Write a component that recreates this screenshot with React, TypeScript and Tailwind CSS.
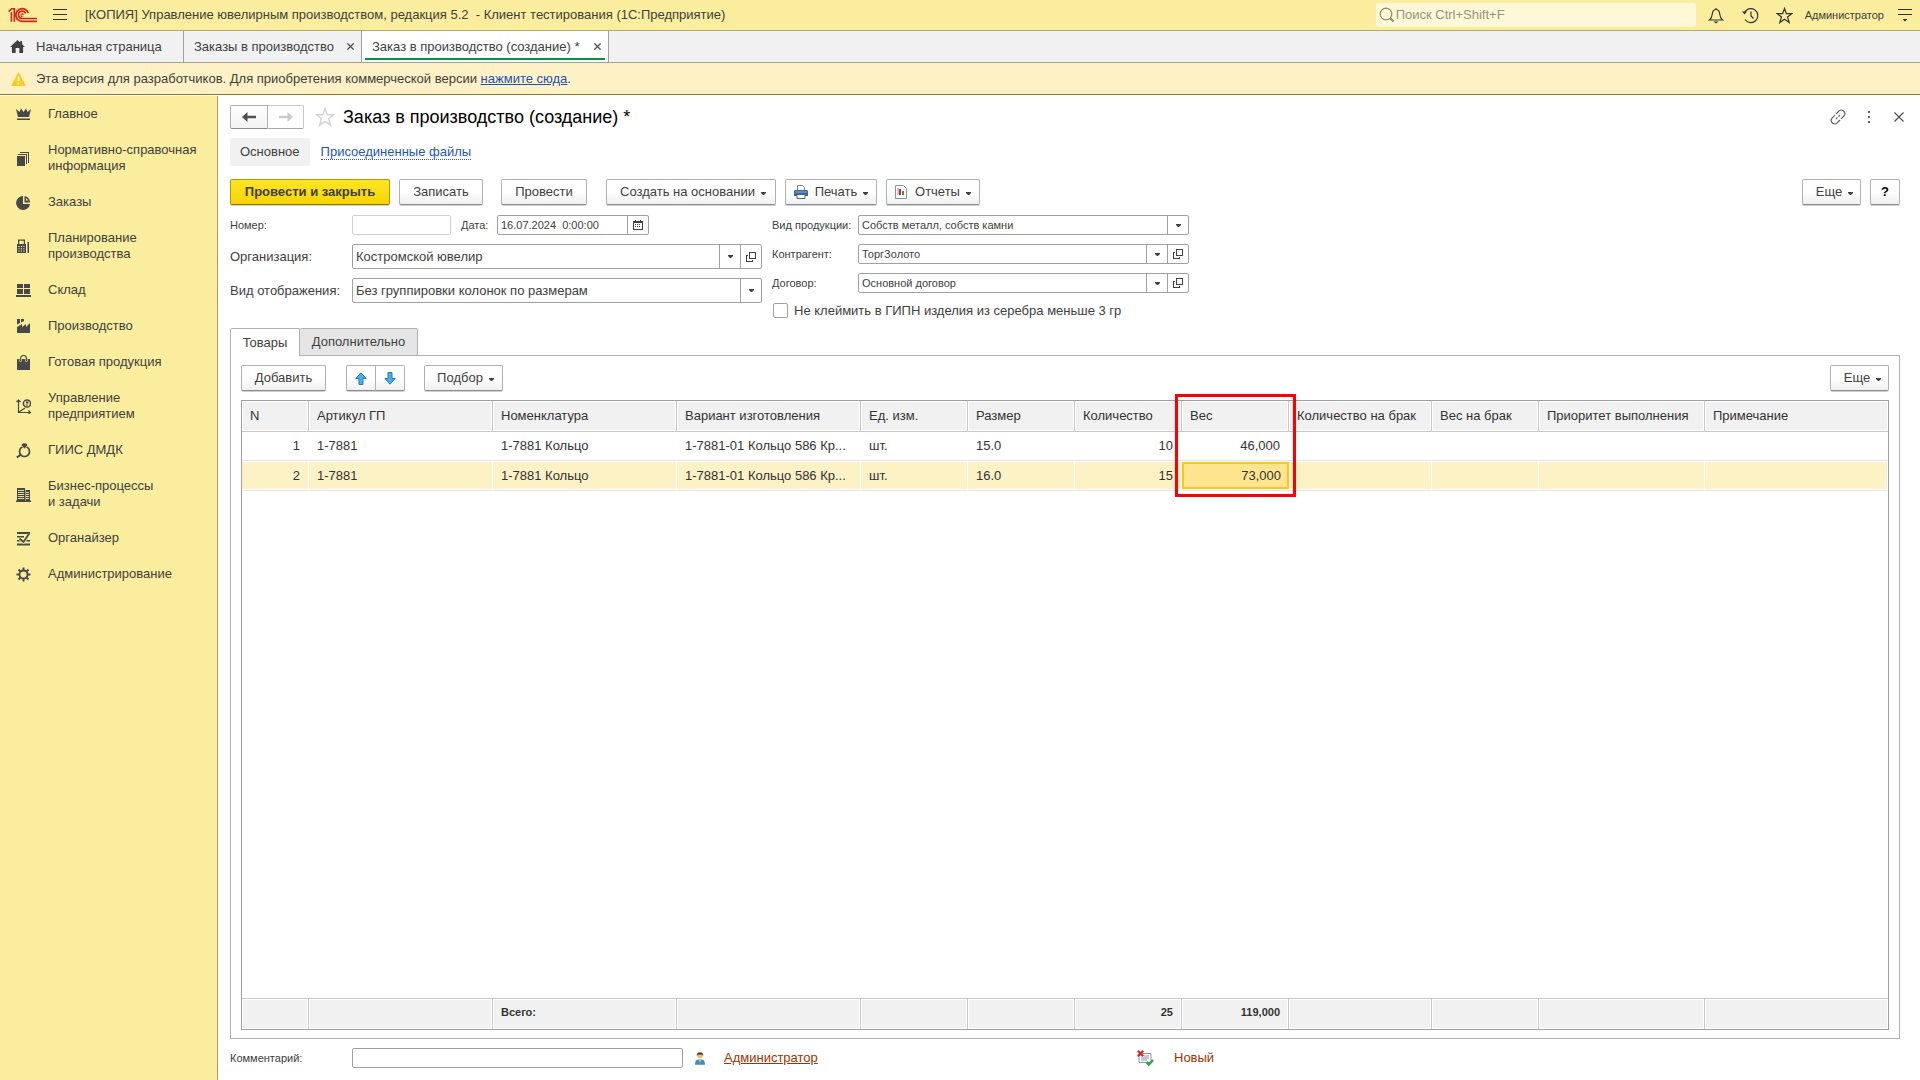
import type { ReactNode } from "react";

/* ---------- icons ---------- */

const Caret = () => (
  <svg width="5" height="3" viewBox="0 0 5 3" className="shrink-0" aria-hidden="true">
    <path d="M0 0h5v1L3 3H2L0 1z" fill="#404040" />
  </svg>
);

const OpenIcon = () => (
  <svg width="10" height="10" viewBox="0 0 10 10" fill="none" stroke="#404040" shapeRendering="crispEdges" aria-hidden="true">
    <path d="M3.5 .5h6v6h-6z" />
    <path d="M2 3.5H.5v6h6V8" />
  </svg>
);

const Star = ({ size, color }: { size: number; color: string }) => (
  <svg width={size} height={size} viewBox="0 0 18 18" fill="none" stroke={color} strokeWidth="1.3" aria-hidden="true">
    <path d="M9 1.500l2 5.500h5.700l-4.500 3.600 1.700 5.700L9 12.900l-4.900 3.400 1.700-5.700L1.300 7H7z" />
  </svg>
);

const Logo = () => (
  <svg width="30" height="18" viewBox="0 0 31 18" fill="none" stroke="#d6261c" aria-label="1С" role="img">
    <path d="M.5 5.500L4 2.500h2.500V16" strokeWidth="1.700" />
    <path d="M3.500 6V16" strokeWidth="1.700" />
    <path d="M21 7A6.600 6.600 0 1 0 15 15.600H30" strokeWidth="1.900" />
    <path d="M18.200 7.500A3.800 3.800 0 1 0 15 12.600H30" strokeWidth="1.700" />
    <path d="M16 8.800a1.300 1.300 0 1 0-.8 1.700" strokeWidth="1.200" />
  </svg>
);

const Burger = () => (
  <svg width="14" height="14" viewBox="0 0 14 14" stroke="#333" shapeRendering="crispEdges" aria-hidden="true">
    <path d="M0 1.500h14M0 6.500h14M0 11.500h14" />
  </svg>
);

const HomeIcon = () => (
  <svg width="15" height="13" viewBox="0 0 16 14" fill="#404040" aria-hidden="true">
    <path d="M8 0l3 2.800V1h2v3.600L16 7.500h-2V14h-4V8.500H6V14H2V7.500H0z" />
  </svg>
);

const WarnIcon = () => (
  <svg width="15" height="14" viewBox="0 0 15 14" aria-hidden="true">
    <path d="M7.500 0L15 14H0z" fill="#fcc91f" />
    <path d="M7.500 4.500v5M7.500 10.800v1.500" stroke="#fff" strokeWidth="1.600" />
  </svg>
);

const SearchIcon = () => (
  <svg width="16" height="16" viewBox="0 0 16 16" fill="none" stroke="#8f8a6c" aria-hidden="true">
    <circle cx="7" cy="7" r="5.800" strokeWidth="1.200" />
    <path d="M11 11l3.500 3.500" strokeWidth="2.200" />
  </svg>
);

const BellIcon = () => (
  <svg width="16" height="17" viewBox="0 0 16 17" fill="none" stroke="#333" strokeWidth="1.200" aria-hidden="true">
    <path d="M8 1v1.500M1.500 13c2-1.500 2.500-3.500 2.800-6C4.600 4 6 2.500 8 2.500S11.400 4 11.700 7c.3 2.500.8 4.500 2.800 6z" />
    <path d="M5.500 14.500h5L8 16.500z" fill="#333" stroke="none" />
  </svg>
);

const HistoryIcon = () => (
  <svg width="17" height="17" viewBox="0 0 17 17" fill="none" stroke="#333" strokeWidth="1.200" aria-hidden="true">
    <path d="M2.300 6A7 7 0 1 1 3 12.500" />
    <path d="M9 4.500v4.500l2.500 2.500" />
    <path d="M0 4.500h5L2.500 7.500z" fill="#333" stroke="none" />
  </svg>
);

const MenuDownIcon = () => (
  <svg width="14" height="14" viewBox="0 0 14 14" stroke="#333" aria-hidden="true">
    <path d="M0 1.500h14M0 6.500h14" shapeRendering="crispEdges" />
    <path d="M4.500 11h5L7 13.500z" fill="#333" stroke="none" />
  </svg>
);

const LinkIcon = () => (
  <svg width="16" height="16" viewBox="0 0 16 16" fill="none" stroke="#606060" strokeWidth="1.200" aria-hidden="true">
    <path d="M6 5l3.100-3.100a3 3 0 0 1 4.300 0l.6.6a3 3 0 0 1 0 4.300L11 9.900" />
    <path d="M10 11l-3.100 3.100a3 3 0 0 1-4.300 0L2 13.500a3 3 0 0 1 0-4.300L5 6.100" />
    <path d="M6 10l1.500-1.500M8.500 7.500L10 6" />
  </svg>
);

const DotsIcon = () => (
  <svg width="4" height="12" viewBox="0 0 4 12" fill="#606060" aria-hidden="true">
    <path d="M1 0h2v2H1zM1 5h2v2H1zM1 10h2v2H1z" />
  </svg>
);

const CrossIcon = ({ size }: { size: number }) => (
  <svg width={size} height={size} viewBox="0 0 10 10" stroke="#505050" strokeWidth={size < 10 ? 1.8 : 1.2} aria-hidden="true">
    <path d="M.5 .5l9 9M9.500 .5l-9 9" />
  </svg>
);

const ArrowH = ({ flip, color }: { flip?: boolean; color: string }) => (
  <svg width="14" height="10" viewBox="0 0 14 10" fill={color} aria-hidden="true">
    <path d={flip ? "M14 5L8.500 0v3.700H0v2.600h8.500V10z" : "M0 5l5.500-5v3.700H14v2.600H5.500V10z"} />
  </svg>
);

const ArrowV = ({ down }: { down?: boolean }) => (
  <svg width="12" height="13" viewBox="0 0 12 13" fill="#45b0ee" stroke="#2e79ac" aria-hidden="true">
    <path d={down ? "M6 12.200L.8 6.500H4v-6h4v6h3.200z" : "M6 .8l5.200 5.700H8v6H4v-6H.8z"} />
  </svg>
);

const CalendarIcon = () => (
  <svg width="10" height="10" viewBox="0 0 10 10" shapeRendering="crispEdges" aria-hidden="true">
    <path d="M.5 1.500h9v8h-9z" fill="#fff" stroke="#404040" />
    <path d="M0 1h10v2H0zM2 0h1v1H2zM7 0h1v1H7z" fill="#404040" />
    <path d="M2 4h1v1H2zM4 4h1v1H4zM6 4h1v1H6zM2 6h1v1H2zM4 6h1v1H4zM6 6h1v1H6z" fill="#404040" />
  </svg>
);

const PrinterIcon = () => (
  <svg width="14" height="14" viewBox="0 0 14 14" aria-hidden="true">
    <path d="M3.500 6V.5h5L10.500 2.500V6" fill="#fff" stroke="#6d8196" />
    <path d="M1 5h12l1 1v5H0V6z" fill="#3b6a97" />
    <path d="M1.500 7h11" stroke="#8fb4d6" />
    <path d="M3 9.500h8v4H3z" fill="#fff" stroke="#4c6681" />
  </svg>
);

const ReportIcon = () => (
  <svg width="12" height="14" viewBox="0 0 12 14" aria-hidden="true">
    <path d="M.5 .5h8l3 3v10H.5z" fill="#fff" stroke="#8296aa" />
    <path d="M2.500 3h1v7h-1z" fill="#8296aa" />
    <path d="M4 4h2v6H4z" fill="#e0231b" />
    <path d="M7 6h2v4H7z" fill="#23a33a" />
  </svg>
);

const PersonIcon = () => (
  <svg width="10" height="13" viewBox="0 0 11 14" aria-hidden="true">
    <circle cx="5.500" cy="4" r="3" fill="#f1bd72" />
    <path d="M2 4.500C1.700 1.500 3 0 5.500 0S9.300 1.500 9 4.500L8 3 5.500 2.500 3 3z" fill="#4b3a2a" />
    <path d="M0 14c0-4 1-5.500 3.500-5.800h4C10 8.500 11 10 11 14z" fill="#378fc9" />
    <path d="M4 8h3l-1.500 4z" fill="#f1bd72" />
  </svg>
);

const StatusIcon = () => (
  <svg width="17" height="16" viewBox="0 0 17 16" fill="none" aria-hidden="true">
    <path d="M2 3.500h12v9H2z" fill="#fff" stroke="#8794a6" />
    <path d="M7 6h5M4 8h8M4 10h6" stroke="#8794a6" />
    <path d="M.8 .8l5.400 5.400M6.200 .8L.8 6.200" stroke="#d9242b" strokeWidth="2.200" />
    <path d="M9.500 12l2.300 2.500L16 10" stroke="#27a844" strokeWidth="2.500" />
  </svg>
);

/* ---------- section icons, 15 x 15 ---------- */

const sectionIcons: Record<string, ReactNode> = {
  crown: <path d="M0 2l3.500 3L5 1.500 7.500 5 10 1.500 11.500 5 15 2l-2 8H2zM1 11.500h13V13H1z" />,
  books: <path d="M1 5h8v10H1zM2 3h9v10h-1V4H2zM4 1h9v11h-1V2H4z" />,
  pie: (
    <>
      <path d="M7 1a7 7 0 1 0 7 8H7z" />
      <path d="M8.500 1v6.500H14A6.200 6.200 0 0 0 8.500 1zM10 3l2.500 2.500H10z" fillRule="evenodd" />
    </>
  ),
  calc: (
    <>
      <path d="M2 5V0.500h7V5h1v9H1V5zM3.200 1.700V5h4.600V1.700zM11.500 3v11H13V3z" fillRule="evenodd" />
      <path d="M2.500 7.500h6M2.500 9.800h6M2.500 12h6" stroke="#fbed9e" strokeDasharray="1.200 1.200" />
    </>
  ),
  store: <path d="M1 1h6v4H1zM8 1h6v4H8zM1 6h6v5H1zM8 6h6v5H8zM0 12h15v2H0z" />,
  factory: <path d="M1 0h3v4l-3 1.500zM5 0h3v2L5 3.500zM1 8l5-3v3l4-3v3l4-4v10H1z" />,
  bag: (
    <>
      <path d="M1 4h13v11H1z" />
      <path d="M4.500 6.500V3.500a3 3 0 0 1 6 0v3" fill="none" stroke="#fbed9e" strokeWidth="2.400" />
      <path d="M4.500 6V3.500a3 3 0 0 1 6 0V6" fill="none" stroke="#484848" strokeWidth="1.200" />
    </>
  ),
  chart: (
    <>
      <path d="M2.500 1v12.500H14M.5 3l2-2 2 2M12.500 11.500l2 2-2 1.500M3 13l6-4" fill="none" stroke="#484848" strokeWidth="1.200" />
      <circle cx="11" cy="4.500" r="3.600" fill="none" stroke="#484848" strokeWidth="1.500" />
      <path d="M10 2.500h2.500v2H10zM9.500 5.500h2.500v1H9.500z" />
    </>
  ),
  ring: (
    <>
      <circle cx="8.500" cy="8.500" r="5" fill="none" stroke="#484848" strokeWidth="1.700" />
      <path d="M5 2l2-2h3l2 2-3.500 4z" stroke="#fbed9e" strokeWidth=".7" />
      <path d="M5 11.500L.8 14.500" stroke="#484848" strokeWidth="2" />
    </>
  ),
  building: (
    <>
      <path d="M1 1h8v13H1zM9.500 3H14v11H9.500zM0 13.500h15V15H0z" />
      <path d="M2 3.500h6M2 5.500h6M2 7.500h6M2 9.500h6M2 11.500h6M10 5.500h3M10 7.500h3M10 9.500h3M10 11.500h3" stroke="#fbed9e" strokeWidth=".9" />
    </>
  ),
  organizer: (
    <>
      <path d="M1 1h13v2H1zM1 5h7v1.500H1zM1 9h13v1.500H1zM1 12.500h13v2H1z" />
      <path d="M3.500 7.500l4 3.500 6-8" fill="none" stroke="#fbed9e" strokeWidth="3" />
      <path d="M3.500 7.500l4 3.500 6-9" fill="none" stroke="#484848" strokeWidth="1.700" />
    </>
  ),
  gear: (
    <>
      <circle cx="7.500" cy="7.500" r="4" fill="none" stroke="#484848" strokeWidth="1.800" />
      <path d="M7.500 .5v3M7.500 11.500v3M.5 7.500h3M11.500 7.500h3M2.500 2.500l1.800 1.800M10.700 10.700l1.800 1.800M12.500 2.500l-1.800 1.800M4.300 10.700l-1.800 1.800" stroke="#484848" strokeWidth="2" />
    </>
  ),
};

const sections: { icon: string; lines: string[] }[] = [
  { icon: "crown", lines: ["Главное"] },
  { icon: "books", lines: ["Нормативно-справочная", "информация"] },
  { icon: "pie", lines: ["Заказы"] },
  { icon: "calc", lines: ["Планирование", "производства"] },
  { icon: "store", lines: ["Склад"] },
  { icon: "factory", lines: ["Производство"] },
  { icon: "bag", lines: ["Готовая продукция"] },
  { icon: "chart", lines: ["Управление", "предприятием"] },
  { icon: "ring", lines: ["ГИИС ДМДК"] },
  { icon: "building", lines: ["Бизнес-процессы", "и задачи"] },
  { icon: "organizer", lines: ["Органайзер"] },
  { icon: "gear", lines: ["Администрирование"] },
];

/* ---------- controls ---------- */

const buttonLook =
  "flex items-center justify-center h-[26px] border border-[#b0b0b0] border-b-[#8c8c8c] rounded-[2px] bg-linear-to-b from-white from-50% to-[#f0f0f0] shadow-[0_1px_0_#d0d0d0] whitespace-nowrap";

function Button({ children, className = "", menu = false, label }: { children?: ReactNode; className?: string; menu?: boolean; label?: string }) {
  return (
    <button type="button" aria-label={label} className={`${buttonLook} ${className}`}>
      {children}
      {menu && (
        <span className="ml-1.5 mt-0.5">
          <Caret />
        </span>
      )}
    </button>
  );
}

function Combo({ id, value, small = false, open = false }: { id: string; value: string; small?: boolean; open?: boolean }) {
  return (
    <div className={`flex flex-1 min-w-0 border border-[#a0a0a0] rounded-[2px] bg-white ${small ? "h-5 text-[11px]" : "h-[25px]"}`}>
      <div className="relative flex-1 min-w-0 flex">
        <select id={id} defaultValue={value} className="w-full appearance-none bg-transparent pl-[3px] pr-6 outline-none">
          <option>{value}</option>
        </select>
        <span className="pointer-events-none absolute inset-y-0 right-0 w-[21px] border-l border-[#a0a0a0] flex items-center justify-center">
          <Caret />
        </span>
      </div>
      {open && (
        <button type="button" aria-label="Открыть" className="w-[21px] border-l border-[#a0a0a0] flex items-center justify-center">
          <OpenIcon />
        </button>
      )}
    </div>
  );
}

/* ---------- goods table ---------- */

const columns: { title: string; width: string; right?: boolean }[] = [
  { title: "N", width: "w-[67px]", right: true },
  { title: "Артикул ГП", width: "w-[184px]" },
  { title: "Номенклатура", width: "w-[184px]" },
  { title: "Вариант изготовления", width: "w-[184px]" },
  { title: "Ед. изм.", width: "w-[107px]" },
  { title: "Размер", width: "w-[107px]" },
  { title: "Количество", width: "w-[107px]", right: true },
  { title: "Вес", width: "w-[107px]", right: true },
  { title: "Количество на брак", width: "w-[143px]" },
  { title: "Вес на брак", width: "w-[107px]" },
  { title: "Приоритет выполнения", width: "w-[166px]" },
  { title: "Примечание", width: "w-auto" },
];

const rows = [
  ["1", "1-7881", "1-7881 Кольцо", "1-7881-01 Кольцо 586 Кр...", "шт.", "15.0", "10", "46,000", "", "", "", ""],
  ["2", "1-7881", "1-7881 Кольцо", "1-7881-01 Кольцо 586 Кр...", "шт.", "16.0", "15", "73,000", "", "", "", ""],
];

const totals = ["", "", "Всего:", "", "", "", "25", "119,000", "", "", "", ""];

const WEIGHT = 7;
const SELECTED_ROW = 1;

function GoodsTable() {
  return (
    <div className="flex-1 min-h-0 border border-[#a0a0a0]">
      <table className="w-full h-full table-fixed border-separate border-spacing-0 text-[#333]">
        <colgroup>
          {columns.map((c) => (
            <col key={c.title} className={c.width} />
          ))}
        </colgroup>
        <thead>
          <tr className="h-[31px]">
            {columns.map((c, i) => (
              <th
                key={c.title}
                scope="col"
                className="relative px-2 py-0 text-left font-normal whitespace-nowrap bg-[#f1f1f1] border-r border-b border-[#c8c8c8] last:border-r-0 shadow-[inset_0_0_0_1px_#fff]"
              >
                {c.title}
                {i === WEIGHT && (
                  <span className="pointer-events-none absolute z-10 -left-[7px] -top-[7px] -right-[8px] h-[103px] border-3 border-[#ff0000]" />
                )}
              </th>
            ))}
          </tr>
        </thead>
        <tbody>
          {rows.map((r, ri) => (
            <tr key={r[0]} className={ri === SELECTED_ROW ? "h-[30px] bg-[#fdf1c6]" : "h-[29px]"}>
              {r.map((v, i) => {
                const selected = ri === SELECTED_ROW;
                const active = selected && i === WEIGHT;
                const align = columns[i].right ? "text-right" : "text-left";
                const look = active
                  ? "bg-[#ffe48f] shadow-[inset_0_1px_0_#fff,inset_0_-1px_0_#fff,inset_2px_3px_0_#fbc61d,inset_-2px_-3px_0_#fbc61d]"
                  : selected
                    ? "border-r border-r-white shadow-[inset_0_1px_0_#fff,inset_0_-1px_0_#fff]"
                    : "border-r border-r-transparent";
                return (
                  <td key={i} className={`px-2 py-0 whitespace-nowrap border-b border-b-[#e4e4e4] ${align} ${look}`}>
                    {v}
                  </td>
                );
              })}
            </tr>
          ))}
          <tr className="h-full">
            <td colSpan={columns.length} className="p-0" />
          </tr>
        </tbody>
        <tfoot>
          <tr className="h-[31px]">
            {totals.map((v, i) => (
              <td
                key={i}
                className={`px-2 pt-0 pb-1 text-[11px] font-bold bg-[#f1f1f1] border-t border-r border-[#c8c8c8] last:border-r-0 shadow-[inset_0_0_0_1px_#fff] ${columns[i].right ? "text-right" : "text-left"}`}
              >
                {v}
              </td>
            ))}
          </tr>
        </tfoot>
      </table>
    </div>
  );
}

/* ---------- page parts ---------- */

function TopBar() {
  return (
    <header className="flex items-center h-[31px] shrink-0 px-2 bg-[#fbed9e] border-b border-[#b5aa6b]">
      <Logo />
      <button type="button" aria-label="Меню" className="ml-[15px]">
        <Burger />
      </button>
      <h1 className="ml-[18px] whitespace-pre">[КОПИЯ] Управление ювелирным производством, редакция 5.2{"  "}- Клиент тестирования (1С:Предприятие)</h1>
      <div className="ml-auto flex items-center w-80 h-6 rounded-[2px] bg-[#fef7d8] pl-[3px]">
        <SearchIcon />
        <input type="search" aria-label="Поиск" placeholder="Поиск Ctrl+Shift+F" className="flex-1 min-w-0 bg-transparent pl-px outline-none placeholder:text-[#99947a]" />
      </div>
      <button type="button" aria-label="Уведомления" className="ml-3"><BellIcon /></button>
      <button type="button" aria-label="История" className="ml-[18px]"><HistoryIcon /></button>
      <button type="button" aria-label="Избранное" className="ml-[17px]"><Star size={17} color="#333" /></button>
      <button type="button" className="ml-3 text-[11px]">Администратор</button>
      <button type="button" aria-label="Сервис" className="ml-[14px]"><MenuDownIcon /></button>
    </header>
  );
}

function TabBar() {
  return (
    <nav className="flex h-8 shrink-0 bg-[#f1f1f1] border-b border-[#a0a0a0]">
      <a href="#home" className="flex items-center w-[184px] pl-[10px] border-r border-[#a0a0a0]">
        <HomeIcon />
        <span className="ml-[11px]">Начальная страница</span>
      </a>
      <div className="flex items-center justify-between w-[178px] pl-[10px] pr-[7px] border-r border-[#a0a0a0]">
        <a href="#orders">Заказы в производство</a>
        <button type="button" aria-label="Закрыть"><CrossIcon size={7} /></button>
      </div>
      <div className="relative flex items-center justify-between w-[247px] pl-[10px] pr-[7px] border-r border-[#a0a0a0] bg-white">
        <a href="#order">Заказ в производство (создание) *</a>
        <button type="button" aria-label="Закрыть"><CrossIcon size={7} /></button>
        <span className="absolute left-[3px] right-[3px] bottom-[2px] h-[2px] bg-[#009646]" />
      </div>
    </nav>
  );
}

function Sidebar() {
  return (
    <nav className="w-[218px] shrink-0 bg-[#fbed9e] border-r border-[#a89f69]">
      {sections.map((s) => (
        <a key={s.icon} href={`#${s.icon}`} className="flex items-center py-[10px] pl-4 leading-4">
          <svg width="15" height="15" viewBox="0 0 15 15" fill="#484848" className="shrink-0" aria-hidden="true">
            {sectionIcons[s.icon]}
          </svg>
          <span className="ml-[17px]">
            {s.lines.map((l) => (
              <span key={l} className="block whitespace-nowrap">{l}</span>
            ))}
          </span>
        </a>
      ))}
    </nav>
  );
}

function FormFields() {
  return (
    <div className="flex mt-[10px] gap-[10px]">
      <div className="w-[532px] flex flex-col gap-[9px]">
        <div className="flex items-center h-5 text-[11px]">
          <label htmlFor="number" className="w-[122px]">Номер:</label>
          <input id="number" className="w-[99px] h-5 border border-[#d0d0d0] rounded-[2px] px-1" />
          <label htmlFor="date" className="w-[36px] ml-[10px]">Дата:</label>
          <div className="flex w-[152px] h-5 border border-[#a0a0a0] rounded-[2px]">
            <input id="date" defaultValue="16.07.2024  0:00:00" className="flex-1 min-w-0 pl-[3px] outline-none" />
            <button type="button" aria-label="Выбрать дату" className="w-[21px] border-l border-[#a0a0a0] flex items-center justify-center">
              <CalendarIcon />
            </button>
          </div>
        </div>
        <div className="flex items-center">
          <label htmlFor="org" className="w-[122px]">Организация:</label>
          <Combo id="org" value="Костромской ювелир" open />
        </div>
        <div className="flex items-center">
          <label htmlFor="view" className="w-[122px] whitespace-nowrap">Вид отображения:</label>
          <Combo id="view" value="Без группировки колонок по размерам" />
        </div>
      </div>
      <div className="w-[417px] flex flex-col gap-[9px]">
        <div className="flex items-center text-[11px]">
          <label htmlFor="kind" className="w-[86px] whitespace-nowrap">Вид продукции:</label>
          <Combo id="kind" value="Собств металл, собств камни" small />
        </div>
        <div className="flex items-center text-[11px]">
          <label htmlFor="partner" className="w-[86px]">Контрагент:</label>
          <Combo id="partner" value="ТоргЗолото" small open />
        </div>
        <div className="flex items-center text-[11px]">
          <label htmlFor="contract" className="w-[86px]">Договор:</label>
          <Combo id="contract" value="Основной договор" small open />
        </div>
        <label className="flex items-center h-[17px] whitespace-nowrap">
          <input type="checkbox" className="appearance-none w-[15px] h-[15px] border border-[#a0a0a0] rounded-[2px] bg-white mr-[6px] ml-px" />
          Не клеймить в ГИПН изделия из серебра меньше 3 гр
        </label>
      </div>
    </div>
  );
}

export default function App() {
  return (
    <div className="h-screen flex flex-col overflow-hidden bg-white text-[#404040] text-[13px] leading-4 font-['Liberation_Sans',Arial,sans-serif]">
      <TopBar />
      <TabBar />
      <div className="flex items-center h-8 shrink-0 pl-[11px] bg-[#fef1c5] border-b border-[#96791c]">
        <WarnIcon />
        <p className="ml-[10px]">
          Эта версия для разработчиков. Для приобретения коммерческой версии{" "}
          <a href="#buy" className="text-[#1b53b5] underline">нажмите сюда</a>.
        </p>
      </div>
      <div className="flex flex-1 min-h-0 pt-px">
        <Sidebar />
        <main className="flex-1 min-w-0 flex flex-col pl-3 pr-5 pt-[9px]">
          <div className="flex items-center h-6">
            <div className="flex h-6">
              <button type="button" aria-label="Назад" className="flex items-center justify-center w-[38px] border border-[#b0b0b0] border-b-[#8c8c8c] rounded-l-[2px] bg-linear-to-b from-white to-[#f4f4f4]">
                <ArrowH color="#505050" />
              </button>
              <button type="button" aria-label="Вперед" className="flex items-center justify-center w-9 border border-l-0 border-[#c8c8c8] border-b-[#a8a8a8] rounded-r-[2px] bg-white">
                <ArrowH flip color="#cccccc" />
              </button>
            </div>
            <button type="button" aria-label="В избранное" className="ml-[11px]"><Star size={20} color="#d4d4d4" /></button>
            <h2 className="ml-2 text-[18px] leading-6 text-black">Заказ в производство (создание) *</h2>
            <div className="ml-auto flex items-center">
              <button type="button" aria-label="Ссылка"><LinkIcon /></button>
              <button type="button" aria-label="Действия" className="ml-[21px]"><DotsIcon /></button>
              <button type="button" aria-label="Закрыть" className="ml-[23px] -mr-1"><CrossIcon size={10} /></button>
            </div>
          </div>
          <div className="flex items-center mt-[9px]">
            <a href="#main" className="flex items-center h-7 px-[10px] rounded-[3px] bg-[#f1f1f1]">Основное</a>
            <a href="#files" className="ml-[11px] text-[#2456b8] border-b border-dotted border-[#2456b8] leading-[15px]">Присоединенные файлы</a>
          </div>
          <div className="flex mt-[13px]">
            <button type="button" className="w-40 h-[26px] border border-[#b09a00] border-b-[#8d7b00] rounded-[2px] bg-linear-to-b from-[#ffe522] to-[#f5d400] shadow-[0_1px_0_#d0d0d0] font-bold">
              Провести и закрыть
            </button>
            <Button className="w-[84px] ml-[9px]">Записать</Button>
            <Button className="w-[86px] ml-[18px]">Провести</Button>
            <Button className="w-[170px] ml-[19px] pl-1" menu>Создать на основании</Button>
            <Button className="w-[92px] ml-[9px]" menu><PrinterIcon /><span className="ml-[7px]">Печать</span></Button>
            <Button className="w-[94px] ml-[9px]" menu><ReportIcon /><span className="ml-2">Отчеты</span></Button>
            <Button className="w-[59px] ml-auto pl-1.5" menu>Еще</Button>
            <Button className="w-[30px] ml-[9px] font-bold text-black" label="Справка">?</Button>
          </div>
          <FormFields />
          <div className="flex flex-col flex-1 min-h-0 mt-[9px]">
            <div role="tablist" className="flex z-10 -mb-px">
              <button type="button" role="tab" aria-selected="true" className="h-7 w-[70px] border border-b-0 border-[#b0b0b0] rounded-t-[2px] bg-white">Товары</button>
              <button type="button" role="tab" aria-selected="false" className="h-7 w-[118px] border border-l-0 border-[#b0b0b0] rounded-t-[2px] bg-[#e5e5e5]">Дополнительно</button>
            </div>
            <div className="flex flex-col flex-1 min-h-0 border border-[#b0b0b0] pt-[9px] px-[10px] pb-[8px]">
              <div className="flex">
                <Button className="w-[85px]">Добавить</Button>
                <Button className="w-[30px] ml-5 rounded-r-none" label="Вверх"><ArrowV /></Button>
                <Button className="w-[30px] -ml-px rounded-l-none" label="Вниз"><ArrowV down /></Button>
                <Button className="w-[79px] ml-[19px] pl-1" menu>Подбор</Button>
                <Button className="w-[59px] ml-auto pl-1.5" menu>Еще</Button>
              </div>
              <div className="flex flex-col flex-1 min-h-0 mt-[9px]">
                <GoodsTable />
              </div>
            </div>
          </div>
          <div className="flex items-center mt-[9px] mb-[12px]">
            <label htmlFor="comment" className="w-[122px] text-[11px]">Комментарий:</label>
            <input id="comment" className="w-[331px] h-5 border border-[#a0a0a0] rounded-[2px] px-1 mr-3" />
            <PersonIcon />
            <a href="#admin" className="ml-[19px] w-[413px] text-[#9c3400] underline">Администратор</a>
            <StatusIcon />
            <a href="#status" className="ml-5 text-[#9c3400]">Новый</a>
          </div>
        </main>
      </div>
    </div>
  );
}
